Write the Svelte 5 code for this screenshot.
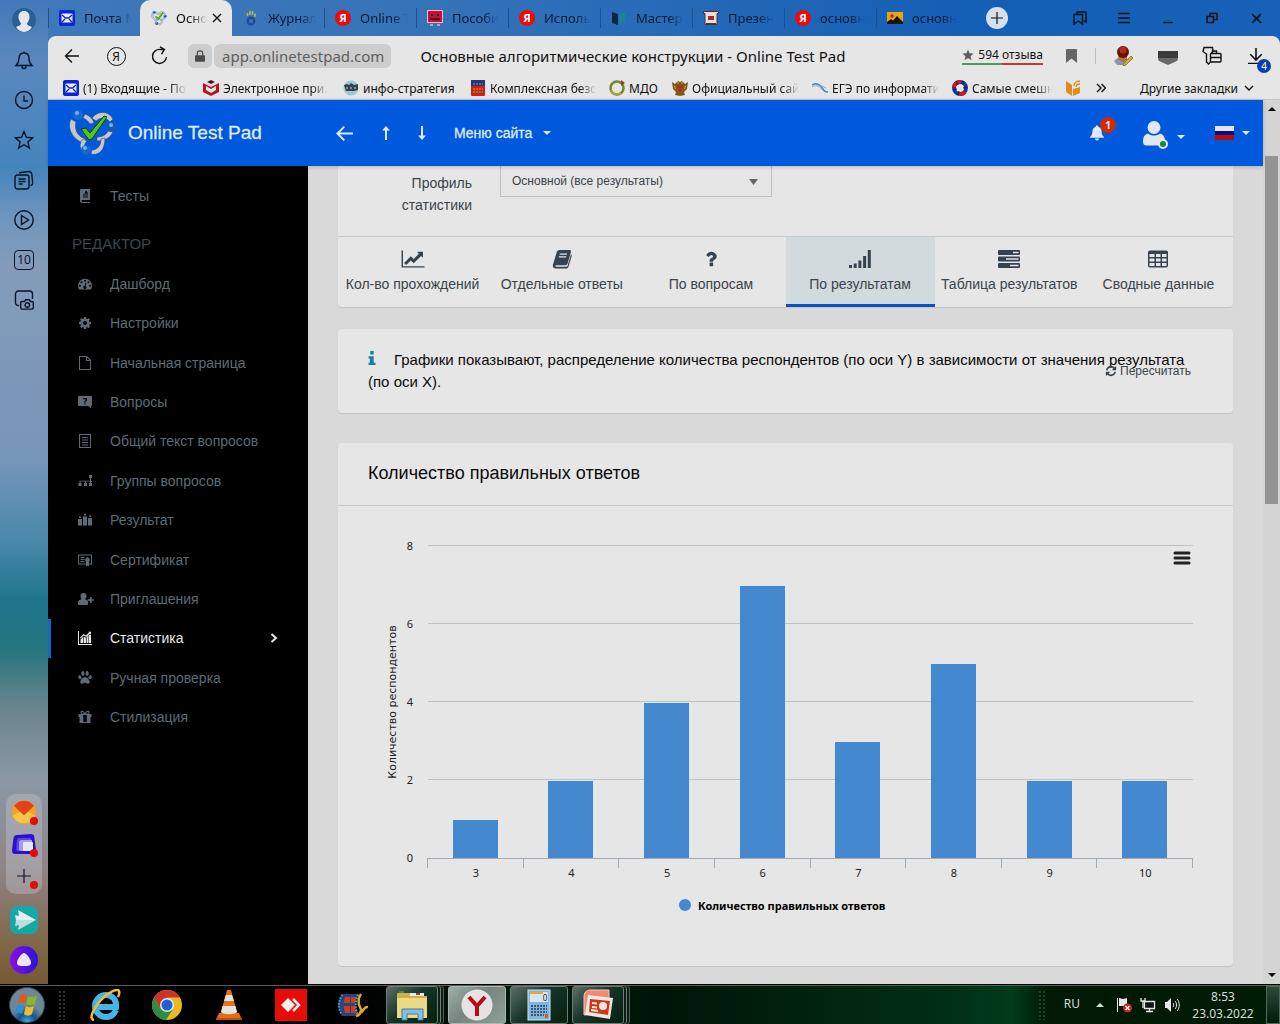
<script lang="ts">
    type Bookmark = { icon: string; title: string; width: number };

    const FA = "0 0 1792 1792";
    const S = "0 0 14 14";

    // filled, single colour icons: [viewBox, path]
    const glyphs: Record<string, [string, string]> = {
        tests: [S, "M3 0h9v11H4.500a1 1 0 0 0 0 2H12v1H4a2 2 0 0 1-2-2V1a1 1 0 0 1 1-1zM5 7.500v1h5v-1zM5 5.500v1h5v-1zM7.500 2 6.500 5h1l.2-.7h1l.3.7h1L8.700 2z"],
        dashboard: [S, "M7 1.800a7 7 0 0 0-7 7c0 1.300.4 2.500 1 3.600h12c.6-1.100 1-2.300 1-3.600a7 7 0 0 0-7-7zM2 7.800a1 1 0 1 1 0 2 1 1 0 0 1 0-2zM3.500 4.300a1 1 0 1 1 0 2 1 1 0 0 1 0-2zM7 2.800a1 1 0 1 1 0 2 1 1 0 0 1 0-2zM10.500 4.300a1 1 0 1 1 0 2 1 1 0 0 1 0-2zM12 7.800a1 1 0 1 1 0 2 1 1 0 0 1 0-2zM7.500 5.800l.9.300-.8 2.900a1.500 1.500 0 1 1-.9-.2z"],
        cog: [FA, "M1152 896q0-106-75-181t-181-75-181 75-75 181 75 181 181 75 181-75 75-181zm512-109v222q0 12-8 23t-20 13l-185 28q-19 54-39 91 35 50 107 138 10 12 10 25t-9 23q-27 37-99 108t-94 71q-12 0-26-9l-138-108q-44 23-91 38-16 136-29 186-7 28-36 28h-222q-14 0-24.5-8.5t-11.5-21.5l-28-184q-49-16-90-37l-141 107q-10 9-25 9-14 0-25-11-126-114-165-168-7-10-7-23 0-12 8-23 15-21 51-66.5t54-70.5q-27-50-41-99l-183-27q-13-2-21-12.5t-8-23.500v-222q0-12 8-23t19-13l186-28q14-46 39-92-40-57-107-138-10-12-10-24 0-10 9-23 26-36 98.5-107.5t94.5-71.5q13 0 26 10l138 107q44-23 91-38 16-136 29-186 7-28 36-28h222q14 0 24.5 8.5t11.5 21.5l28 184q49 16 90 37l142-107q9-9 24-9 13 0 25 10 129 119 165 170 7 8 7 22 0 12-8 23-15 21-51 66.5t-54 70.5q26 50 41 98l183 28q13 2 21 12.5t8 23.5z"],
        file: [S, "M1 0h8l4 4v10H1zM2 1v12h10V5H8V1zM9 1.500V4h2.500z"],
        questions: [S, "M1 1h12a1 1 0 0 1 1 1v8a1 1 0 0 1-1 1v2.500L10.500 11H1a1 1 0 0 1-1-1V2a1 1 0 0 1 1-1zM5 3v1.200h2.600v1L6.300 6.200v1.300h1.200v-.7L9 5.600V3zM6.300 8.300v1.200h1.200V8.300z"],
        text: [S, "M1 0h12v14H1zM2 1v12h10V1zM4 3h6v1H4zM4 5.500h6v1H4zM4 8h6v1H4zM4 10.500h6v1H4z"],
        groups: [S, "M11 1h3v3h-1v3h1v1h-1v1h1v3h-3V9h1V7.500H8V9h1v3H6V9h1V7.500H2.500V9h1v3h-3V9h1V6.700H12V4h-1z"],
        result: [S, "M1 3.500h2v1.600H1zM0 6h4v6.500H0zM6 .8h2v1.700H6zM5 3.500h4v9H5zM11 2.500h2v1.600h-2zM10 5h4v7.500h-4z"],
        certificate: [S, "M0 1.500h14v10h-3v2l-1.500-1-1.500 1v-2H0zM1 2.500v8h7v-2a2.300 2.300 0 1 1 3 0v2h2v-8zM2.500 4h4v1h-4zM2.500 6h4v1h-4zM2.500 8h4v1h-4z"],
        invite: ["0 0 16 14", "M5.500 1a3 3 0 0 1 3 3c0 1.300-.6 2.600-1.500 3.200 2 .3 3 1.400 3 3.300v1.500a1 1 0 0 1-1 1H1a1 1 0 0 1-1-1v-1.500c0-1.900 1.500-3 3.700-3.300C2.900 6.600 2.500 5.300 2.500 4a3 3 0 0 1 3-3zM12 5h1.600v2.200H16v1.600h-2.400V11H12V8.800H9.700V7.200H12z"],
        stats: [S, "M0 0h1v13h13v1H0zM2.500 8.500 5 6v6H2.500zM5.600 5.500 8 6.800V12H5.600zM8.600 6.500 10.500 4v8H8.600zM11 3.800h2V12h-2zM2 6.500 5.500 3l2.500 1.500L11 1.500l-.8-.8H13v2.800l-1-1L8.300 6 5.700 4.400 2.500 7.500z"],
        paw: [S, "M4.800 0c1 0 1.600 1.300 1.600 2.600S5.900 4.800 5 4.800 3.300 3.700 3.300 2.400 3.900 0 4.800 0zM9.200 0c.9 0 1.500 1.100 1.500 2.400S9.900 4.800 9 4.800s-1.400-.9-1.400-2.200S8.200 0 9.200 0zM1.500 4.200C2.600 4.200 3.500 5.500 3.500 6.500S3 8.200 2.100 8.200.3 7 .3 5.900c0-1 .4-1.700 1.200-1.700zM12.500 4.200c.8 0 1.200.7 1.200 1.700 0 1.100-.9 2.300-1.800 2.300s-1.400-.7-1.400-1.700.9-2.300 2-2.300zM7 6c2 0 4.700 3 4.700 5.200 0 1.100-.8 1.500-1.700 1.500-1.200 0-2-.9-3-.9s-1.900.9-3 .9c-.9 0-1.700-.4-1.700-1.500C2.300 9 5 6 7 6z"],
        gift: [S, "M.5 4h3C2 3.500 2 .8 4 .8c1.500 0 2.300 1.200 3 2.200.7-1 1.500-2.200 3-2.200 2 0 2 2.700.5 3.200h3v3h-1v6h-11V7h-1zM4.200 1.900c-1 0-1 1.500 0 1.500h1.900c-.5-.8-1-1.500-1.900-1.500zM9.800 1.900c-.9 0-1.400.7-1.900 1.500h1.900c1 0 1-1.500 0-1.500zM5.300 5v7h3.400V5z"],
        chart: ["0 0 2048 1792", "M2048 1536v128h-2048v-1536h128v1408h1920zm-128-1248v435q0 21-19.5 29.5t-35.5-7.500l-121-121-633 633q-10 10-23 10t-23-10l-233-233-416 416-192-192 585-585q10-10 23-10t23 10l233 233 464-464-121-121q-16-16-7.5-35.5t29.5-19.5h435q14 0 23 9t9 23z"],
        book: ["0 0 20 20", "M7.500 1h10c1.200 0 1.800 1 1.400 2.200l-3.300 11.300c-.4 1.200-1.200 1.700-2.400 1.700H4.100c-.9 0-1 1.600.2 1.600h9.900c.8 0 1.300-.4 1.500-1.200L19 5.200c.7.300.9 1 .7 1.800l-3.200 10.700c-.4 1.100-1.300 1.800-2.600 1.800H3.700C1.500 19.500.3 17.500 1 15.600L4.800 3C5.200 1.700 6 1 7.500 1zM7.800 4.500l-.3 1.200h7.300l.4-1.200zM7 7.200l-.3 1.200H14l.4-1.200z"],
        question: [FA, "M1088 1256v240q0 16-12 28t-28 12h-240q-16 0-28-12t-12-28v-240q0-16 12-28t28-12h240q16 0 28 12t12 28zm316-600q0 54-15.5 101t-35 76.5-55 59.5-57.5 43.5-61 35.5q-41 23-68.5 65t-27.5 67q0 17-12 32.5t-28 15.5h-240q-15 0-25.5-18.5t-10.5-37.5v-45q0-83 65-156.5t143-108.5q59-27 84-56t25-76q0-42-46.5-74t-107.5-32q-65 0-108 29-35 25-107 115-13 16-31 16-12 0-25-8l-164-125q-13-10-15.5-25t5.5-28q160-266 464-266 80 0 161 31t146 83 106 127.5 41 158.5z"],
        signal: ["0 0 22 20", "M0 16h3v3H0zM4.700 14.500h3V19h-3zM9.400 11.500h3V19h-3zM14.100 7h3v12h-3zM18.800 1h3v18h-3z"],
        tasks: ["0 0 22 20", "M1 1h20a1 1 0 0 1 1 1v3a1 1 0 0 1-1 1H1a1 1 0 0 1-1-1V2a1 1 0 0 1 1-1zM15 2.800v1.400h5.500V2.800zM1 7.500h20a1 1 0 0 1 1 1v3a1 1 0 0 1-1 1H1a1 1 0 0 1-1-1v-3a1 1 0 0 1 1-1zM8 9.300v1.400h12.500V9.300zM1 14h20a1 1 0 0 1 1 1v3a1 1 0 0 1-1 1H1a1 1 0 0 1-1-1v-3a1 1 0 0 1 1-1zM12 15.800v1.400h8.500v-1.400z"],
        table: ["0 0 20 20", "M2 1.500h16a2 2 0 0 1 2 2v13a2 2 0 0 1-2 2H2a2 2 0 0 1-2-2v-13a2 2 0 0 1 2-2zM1.500 5v3H6.500V5zM8 5v3h4.500V5zM14 5v3h4.500V5zM1.500 9.500v3h5v-3zM8 9.500v3h4.500v-3zM14 9.500v3h4.500v-3zM1.500 14v3h5v-3zM8 14v3h4.500v-3zM14 14v3h4.500v-3z"],
        refresh: [FA, "M1639 1056q0 5-1 7-64 268-268 434.5t-478 166.5q-146 0-282.5-55t-243.5-157l-129 129q-19 19-45 19t-45-19-19-45v-448q0-26 19-45t45-19h448q26 0 45 19t19 45-19 45l-137 137q71 66 161 102t187 36q134 0 250-65t186-179q11-17 53-117 8-23 30-23h192q13 0 22.5 9.5t9.5 22.5zm25-800v448q0 26-19 45t-45 19h-448q-26 0-45-19t-19-45 19-45l138-138q-148-137-349-137-134 0-250 65t-186 179q-11 17-53 117-8 23-30 23h-199q-13 0-22.5-9.500t-9.500-22.500v-7q65-268 270-434.5t480-166.5q146 0 284 55.5t245 156.5l130-129q19-19 45-19t45 19 19 45z"],
        info: ["0 0 8 16", "M2 0h4v4H2zM0 6h6v7.500h2V16H0v-2.500h1.500V8.500H0z"],
        caret: ["0 0 8 4", "M0 0h8L4 4z"],
        caretUp: ["0 0 8 4", "M0 4h8L4 0z"],
        arrowDown: ["0 0 9 6", "M0 0h9L4.500 6z"],
        bell: ["0 0 16 16", "M8 .5c.8 0 1.200.5 1.200 1.200C11.500 2.300 12.600 4 12.600 6.500c0 3 1 4.200 2.400 5.500v.8H1V12c1.400-1.300 2.400-2.500 2.400-5.500 0-2.500 1.100-4.200 3.400-4.800C6.800 1 7.200.5 8 .5zM6 13.500h4a2 2 0 0 1-4 0z"],
        user: ["0 0 22 25", "M11 0a6.500 6.500 0 1 1 0 13 6.500 6.500 0 0 1 0-13zM5 12.500c3.500 2.700 8.500 2.700 12 0 4 1 5 4.500 5 8 0 2.700-1 4-3.500 4h-15C1 24.500 0 23.200 0 20.500c0-3.500 1-7 5-8z"],
        lock: ["0 0 12 14", "M1 6h1V4a4 4 0 0 1 8 0v2h1a1 1 0 0 1 1 1v6a1 1 0 0 1-1 1H1a1 1 0 0 1-1-1V7a1 1 0 0 1 1-1zm2.500 0h5V4a2.500 2.500 0 0 0-5 0z"],
        starFill: ["0 0 12 12", "M6 .5l1.600 3.700 4 .3-3 2.700.9 4L6 9.100l-3.500 2.100.9-4-3-2.700 4-.3z"],
        ribbon: ["0 0 11 14", "M1 0h9a1 1 0 0 1 1 1v13l-5.500-4.500L0 14V1a1 1 0 0 1 1-1z"],
        navBack: ["0 0 18 16", "M8 0l1.500 1.300L4 7h14v2H4l5.500 5.700L8 16 0 8z"],
        navUp: ["0 0 8 14", "M4 0l4 4.500H5V14H3V4.500H0z"],
        navDown: ["0 0 8 14", "M4 14l4-4.500H5V0H3v9.500H0z"],
    };

    // outlined icons
    const strokes: Record<string, [string, string]> = {
        railBell: ["0 0 20 20", "M10 1.500v1.500M10 3c-3.500 0-5 2.500-5 5.500 0 3.500-1 5-3 7h16c-2-2-3-3.500-3-7C15 5.500 13.500 3 10 3zM8 16.500a2 2 0 0 0 4 0"],
        railClock: ["0 0 20 20", "M10 1.500a8.500 8.500 0 1 1 0 17 8.500 8.500 0 0 1 0-17zM10 5.500V11h4"],
        railStar: ["0 0 20 20", "M10 1.500l2.400 5.800 6.300.5-4.800 4 1.500 6.200L10 14.700 4.600 18l1.500-6.200-4.800-4 6.300-.5z"],
        railTabs: ["0 0 20 20", "M3.500 5h9A2.500 2.500 0 0 1 15 7.500v9a2.500 2.500 0 0 1-2.500 2.500h-9A2.500 2.500 0 0 1 1 16.500v-9A2.500 2.500 0 0 1 3.500 5zM5 2.800 15 1.500c2 0 2.500.8 2.800 2.500l.9 9c0 1.500-.9 2.300-2.200 2.500M4.500 9h7M4.500 11.500h7M4.500 14h4"],
        railPlay: ["0 0 20 20", "M10 .8a9.200 9.200 0 1 1 0 18.400A9.200 9.200 0 0 1 10 .8zM7.500 5.500v9l7-4.500z"],
        railShot: ["0 0 20 20", "M5 15.500A3 3 0 0 1 1.500 13V4A3 3 0 0 1 4.500 1h11a3 3 0 0 1 3 3v5M8.500 11.500h2l1.200-1.700h3.600l1.200 1.700h1.500c.8 0 1.300.5 1.300 1.300v5c0 .8-.5 1.300-1.300 1.300H8c-.8 0-1.300-.5-1.300-1.300v-5c0-.8.500-1.300 1.300-1.300zM13.300 12.800a2.200 2.200 0 1 1 0 4.400 2.200 2.200 0 0 1 0-4.400z"],
        back: ["0 0 16 16", "M8 1.500L1.500 8 8 14.500M1.500 8H15"],
        reload: ["0 0 18 20", "M9.500 3.500A7 7 0 1 0 15.500 11M9 .8l4.500 2.700-3 4.700M13.500 3.500H9"],
        close: ["0 0 10 10", "M1 1l8 8M9 1L1 9"],
        plus: ["0 0 14 14", "M7 0v14M0 7h14"],
        collections: ["0 0 14 14", "M4 3V1h9v10l-2-1.500M1 3.500h8.500V13l-4.200-3L1 13z"],
        burger: ["0 0 12 12", "M0 1.500h12M0 6h12M0 10.500h12"],
        minimize: ["0 0 12 12", "M1 10.500h10"],
        restore: ["0 0 12 12", "M1 4.500h6.500v6H1zM4 4.500V1.500h7v6H7.500"],
        passwords: ["0 0 20 20", "M2 1.500h8.500l.5 4L8.500 8v8L6.500 18l-2-2V8L1 5.500zM10.500 6.500V5h4v2M9 7.500h9c.600 0 1 .4 1 1V15c0 .6-.4 1-1 1H9M9 11.500h10"],
        download: ["0 0 14 14", "M7 0v10M2 5.500l5 5 5-5M0 13.500h14"],
        more: ["0 0 10 10", "M1 1l4 4-4 4M5.500 1l4 4-4 4"],
        down: ["0 0 10 6", "M1 1l4 4 4-4"],
        right: ["0 0 8 10", "M1.500 1L6 5 1.500 9"],
    };

    const tabs = [
        { icon: "mail", title: "Почта M" },
        { icon: "otp", title: "Осно", active: true },
        { icon: "hand", title: "Журнал" },
        { icon: "ya", title: "Online T" },
        { icon: "robot", title: "Пособи" },
        { icon: "ya", title: "Исполь" },
        { icon: "master", title: "Мастер-" },
        { icon: "slides", title: "Презен" },
        { icon: "ya", title: "основн" },
        { icon: "photo", title: "основн" },
    ];

    const bookmarks: Bookmark[] = [
        { icon: "mail", title: "(1) Входящие - По", width: 127 },
        { icon: "cube", title: "Электронное при.", width: 127 },
        { icon: "info", title: "инфо-стратегия", width: 114 },
        { icon: "coat", title: "Комплексная безо", width: 126 },
        { icon: "ring", title: "МДО", width: 50 },
        { icon: "eagle", title: "Официальный сай", width: 127 },
        { icon: "wave", title: "ЕГЭ по информати", width: 127 },
        { icon: "shutter", title: "Самые смешн", width: 100 },
        { icon: "feed", title: "", width: 18 },
    ];

    const rail = [
        { icon: "railBell", label: "Уведомления" },
        { icon: "railClock", label: "История" },
        { icon: "railStar", label: "Избранное" },
        { icon: "railTabs", label: "Коллекции" },
        { icon: "railPlay", label: "Музыка" },
        { icon: "", label: "Вкладки" },
        { icon: "railShot", label: "Скриншот" },
    ];

    const menu = [
        { icon: "dashboard", title: "Дашборд" },
        { icon: "cog", title: "Настройки" },
        { icon: "file", title: "Начальная страница" },
        { icon: "questions", title: "Вопросы" },
        { icon: "text", title: "Общий текст вопросов" },
        { icon: "groups", title: "Группы вопросов" },
        { icon: "result", title: "Результат" },
        { icon: "certificate", title: "Сертификат" },
        { icon: "invite", title: "Приглашения" },
        { icon: "stats", title: "Статистика", active: true },
        { icon: "paw", title: "Ручная проверка" },
        { icon: "gift", title: "Стилизация" },
    ];

    const reports = [
        { id: "runs", icon: "chart", title: "Кол-во прохождений" },
        { id: "answers", icon: "book", title: "Отдельные ответы" },
        { id: "questions", icon: "question", title: "По вопросам" },
        { id: "results", icon: "signal", title: "По результатам" },
        { id: "table", icon: "tasks", title: "Таблица результатов" },
        { id: "summary", icon: "table", title: "Сводные данные" },
    ];

    let report = $state("results");

    const points = [
        { score: 3, count: 1 },
        { score: 4, count: 2 },
        { score: 5, count: 4 },
        { score: 6, count: 7 },
        { score: 7, count: 3 },
        { score: 8, count: 5 },
        { score: 9, count: 2 },
        { score: 10, count: 2 },
    ];

    const PLOT_LEFT = 60;
    const PLOT_RIGHT = 825;
    const PLOT_TOP = 11;
    const PLOT_BOTTOM = 323;
    const BAR_WIDTH = 45;
    const MAX_COUNT = 8;

    const slot = (PLOT_RIGHT - PLOT_LEFT) / points.length;
    const unit = (PLOT_BOTTOM - PLOT_TOP) / MAX_COUNT;

    function yFor(value: number) {
        return PLOT_BOTTOM - value * unit;
    }

    function tickX(index: number) {
        return Math.round(PLOT_LEFT + index * slot) - 0.5;
    }

    function barX(index: number) {
        return Math.floor(PLOT_LEFT + (index + 0.5) * slot - BAR_WIDTH / 2);
    }
</script>

{#snippet glyph(name: string)}
    <svg class="glyph {name}" viewBox={glyphs[name][0]} aria-hidden="true">
        <path fill="currentColor" fill-rule="evenodd" d={glyphs[name][1]} />
    </svg>
{/snippet}

{#snippet line(name: string)}
    <svg class="line {name}" viewBox={strokes[name][0]} aria-hidden="true">
        <path fill="none" stroke="currentColor" d={strokes[name][1]} />
    </svg>
{/snippet}

{#snippet logo()}
    <svg class="logo" viewBox="0 0 50 46" aria-hidden="true">
        <g fill="#c4c8ce" stroke="#39455f" stroke-width=".6">
            <path d="M3 9C-1 17 3 28 15 33l3-4C10 27 6 20 8 12z" />
            <path d="M17 4c5 2 8 5 9 9l-4 1c-2-3-4-5-7-6z" />
            <path d="M24 8c5-7 16-8 21 1l-3 3c-4-5-9-5-14-1z" />
            <path d="M45 22c-3 6-8 9-16 9v-4c5 0 9-2 11-6z" />
            <path d="M15 29c-3 3-4 8-1 12l3-4c-1-2 0-4 2-6z" />
            <path d="M23 44c8 2 14-4 14-16l-4 1c0 7-4 11-9 11z" />
        </g>
        <circle cx="10" cy="5" r="5" fill="#1767cd" /><circle cx="9" cy="3" r="2" fill="#77b3f2" />
        <circle cx="44" cy="17" r="5" fill="#1258bd" /><circle cx="43" cy="15" r="2" fill="#77b3f2" />
        <circle cx="18" cy="40" r="5" fill="#1767cd" /><circle cx="17" cy="38" r="2" fill="#77b3f2" />
        <path fill="#4dc814" stroke="#103908" d="M13 19l5-1 4 5L36 6l3 1-15 22-3 1z" />
    </svg>
{/snippet}

{#snippet favicon(name: string)}
    {#if name === "otp"}
        {@render logo()}
    {:else}
        <svg class="favicon" viewBox="0 0 16 16" aria-hidden="true">
            {#if name === "mail"}
                <rect width="16" height="16" rx="2" fill="#0827d4" />
                <rect x="2.500" y="3.500" width="11" height="9" rx="1" fill="#e8ecf6" />
                <path fill="none" stroke="#0827d4" stroke-width="1.300" d="M3 5l3.500 3h3L13 5M3 12l3-3M13 12l-3-3" />
            {:else if name === "ya"}
                <circle cx="8" cy="8" r="8" fill="#ee0b07" />
                <text x="8" y="12" text-anchor="middle" fill="#fff" font-size="11" font-weight="700">Я</text>
            {:else if name === "hand"}
                <circle cx="8" cy="11" r="3.300" fill="none" stroke="#1d4e9c" stroke-width="2.400" />
                <path stroke="#c3b438" stroke-width="1.600" d="M4.500 6V3M7 5V1M9.500 5V1M12 7V3.500" />
            {:else if name === "robot"}
                <rect x=".5" y=".5" width="15" height="12" fill="#c5103a" stroke="#efb8c6" />
                <path fill="#4c0515" d="M4 4h2v2H4zM10 4h2v2h-2zM3 8h10v2H3z" />
                <path stroke="#d997a8" stroke-width="2" d="M3 15h3M10 15h3" />
            {:else if name === "master"}
                <path fill="#0b2743" d="M1 2l6 2v11l-6-2z" /><path fill="#1a8594" d="M8 4l6-2v10l-6 3z" />
            {:else if name === "slides"}
                <path fill="#e8dfdc" stroke="#4f3230" d="M.5 1.500h15v2h-1.500v11H2v-11H.5z" />
                <path fill="#ae2820" d="M5 6h6v4H5z" /><path fill="#4f3230" d="M3 13h10v1H3z" />
            {:else if name === "photo"}
                <rect y="2" width="16" height="12" fill="#eba50b" /><circle cx="5" cy="6" r="1.800" fill="#c71f18" />
                <path fill="#17130b" d="M0 14v-2l4-3 2 1.500L10 6l6 6v2z" />
            {:else if name === "cube"}
                <path fill="#b51420" d="M0 3l8 4 8-4v9l-8 4-8-4z" /><path fill="#5b0c12" d="M4 2l4-2 4 2-4 2z" />
                <path fill="#e7e4e4" d="M3 6l5 3 5-3v4l-5 3-5-3z" />
            {:else if name === "info"}
                <circle cx="8" cy="8" r="7.500" fill="#9cc8de" /><path fill="#33434c" d="M1 5l3-1 2 1 2-2 3 2 4-1v6l-4 1H3z" />
                <path stroke="#cfdfe8" d="M3 8h2M7 8h2M11 8h2" />
            {:else if name === "coat"}
                <rect x="1" width="14" height="16" rx="1" fill="#c42516" /><path fill="#223587" d="M1 0h14v6H1z" />
                <path stroke="#d9952b" stroke-dasharray="2 1" d="M3 4h10M3 9h10M3 12h10" />
            {:else if name === "ring"}
                <circle cx="8" cy="8" r="6.500" fill="none" stroke="#6b8c28" stroke-width="2.500" />
                <path fill="none" stroke="#b5a03c" stroke-width="2" d="M2 10a6.500 6.500 0 0 0 10 3" /><path fill="#a33a26" d="M12 0l4 3-4 3z" />
            {:else if name === "eagle"}
                <path fill="#7d5a16" d="M0 2l3 2 3-3 2 1 2-1 3 3 3-2-1 7-3 3 1 3-5 1-5-1 1-3-3-3z" />
                <path fill="#bd2a1e" d="M5.500 6h5v4L8 12l-2.500-2z" /><path stroke="#c9a83f" d="M2 6l2 3M14 6l-2 3M5 3h2M9 3h2" />
            {:else if name === "wave"}
                <path fill="none" stroke="#4e8fb5" stroke-width="1.600" d="M0 5c5-3 9 1 11 4 1 3 3 3 5 3" />
                <path fill="none" stroke="#86b4cf" d="M0 7c5-3 8 0 10 3M8 5l6 3" />
            {:else if name === "shutter"}
                <circle cx="8" cy="8" r="6" fill="none" stroke="#1537a3" stroke-width="4" />
                <path fill="none" stroke="#c91e1a" stroke-width="4" d="M9 2a6 6 0 0 0-7 5M7 14a6 6 0 0 0 6-2" />
                <path stroke="#222" d="M4 1l2 4M12 1l-1 4M1 10l4-1M15 7l-4 1M6 15l1-4" />
            {:else if name === "feed"}
                <path fill="#e28c20" d="M1 1l6 4v11l-6-4zM8 16V9l7-2v6z" />
                <path fill="none" stroke="#e28c20" stroke-width="1.300" d="M9 6c0-3 2-5 6-5M11 7c0-2 2-3 4-3" />
            {/if}
        </svg>
    {/if}
{/snippet}

<div class="desktop">
    <div class="browser">
        <aside class="rail">
            <button type="button" aria-label="Профиль">
                <svg class="avatar" viewBox="0 0 24 24" aria-hidden="true">
                    <circle cx="12" cy="12" r="12" fill="#2c5f96" />
                    <path fill="#e4e8ed" d="M12 3c3.500 0 5.500 2.500 5.500 6 0 3-1.500 5-2.500 6.500 0 2 3 2.500 5 3.500-4 6.500-12 6.500-16 0 2-1 5-1.500 5-3.500C8 14 6.500 12 6.500 9c0-3.500 2-6 5.500-6z" />
                </svg>
            </button>
            {#each rail as item}
                <button type="button" aria-label={item.label}>
                    {#if item.icon}
                        {@render line(item.icon)}
                    {:else}
                        <span class="tab-count">10</span>
                    {/if}
                </button>
            {/each}
            <div class="pinned">
                <button type="button" aria-label="Почта">
                    <svg viewBox="0 0 24 24" aria-hidden="true">
                        <circle cx="12" cy="12" r="12" fill="#f0a528" />
                        <path fill="#f5c54a" d="M1 16l11-7 11 7a12 12 0 0 1-22 0z" />
                        <path fill="#e2431d" d="M2 6a12 12 0 0 1 20 0L12 15.500z" />
                    </svg>
                    <i class="dot"></i>
                </button>
                <button type="button" aria-label="Телемост">
                    <svg viewBox="0 0 24 24" aria-hidden="true">
                        <path fill="#2f0fce" d="M5 3l14-1c2 0 3 1 3.200 3L24 18c0 3-1 4-3 4H4c-3 0-4-1-4-4L1.500 6C2 4 3 3 5 3z" />
                        <path fill="#5a46dc" d="M7 6h12l1 13H6c-1 0-2-1-2-2l1-9c0-1 1-2 2-2z" />
                        <path fill="#a79cee" d="M9 8h11v11H9c-1 0-2-1-2-2V10c0-1 1-2 2-2z" />
                        <rect x="11" y="10" width="10" height="9" rx="1" fill="#e9e7f5" />
                    </svg>
                    <i class="dot"></i>
                </button>
                <button type="button" aria-label="Добавить">
                    {@render line("plus")}
                    <i class="dot"></i>
                </button>
            </div>
            <button type="button" aria-label="Мессенджер">
                <svg class="app" viewBox="0 0 28 28" aria-hidden="true">
                    <rect width="28" height="28" rx="7" fill="#15a9a5" />
                    <path fill="#e5efef" d="M8 4l18 10H6L5 9l4 1z" /><path fill="#c3dcdc" d="M6 14h20L8 24l1-5-4 1z" />
                </svg>
            </button>
            <button type="button" aria-label="Алиса">
                <svg class="app" viewBox="0 0 28 28" aria-hidden="true">
                    <defs>
                        <linearGradient id="alice" x2="1"><stop stop-color="#8a10e0" /><stop offset="1" stop-color="#2a14d8" /></linearGradient>
                    </defs>
                    <circle cx="14" cy="14" r="14" fill="url(#alice)" />
                    <path fill="#eae6f2" d="M14 7c2 0 7 6 7 9.500S18 20 14 20s-7 0-7-3.500S12 7 14 7z" />
                </svg>
            </button>
        </aside>

        <div class="window">
            <div class="tab-strip">
                {#each tabs as tab}
                    <div class="tab" class:active={tab.active}>
                        {@render favicon(tab.icon)}
                        <span class="fade">{tab.title}</span>
                        {#if tab.active}
                            <button type="button" aria-label="Закрыть вкладку">{@render line("close")}</button>
                        {/if}
                    </div>
                {/each}
                <button type="button" class="new-tab" aria-label="Новая вкладка">{@render line("plus")}</button>
                <div class="window-buttons">
                    <button type="button" aria-label="Коллекции">{@render line("collections")}</button>
                    <button type="button" aria-label="Меню">{@render line("burger")}</button>
                    <button type="button" aria-label="Свернуть">{@render line("minimize")}</button>
                    <button type="button" aria-label="Восстановить">{@render line("restore")}</button>
                    <button type="button" aria-label="Закрыть">{@render line("close")}</button>
                </div>
            </div>

            <div class="chrome">
                <div class="address">
                    <button type="button" aria-label="Назад">{@render line("back")}</button>
                    <button type="button" class="yandex" aria-label="Яндекс"><span>Я</span></button>
                    <button type="button" aria-label="Обновить">{@render line("reload")}</button>
                    <span class="lock-box">{@render glyph("lock")}</span>
                    <span class="url">app.onlinetestpad.com</span>
                    <span class="page-title">Основные алгоритмические конструкции - Online Test Pad</span>
                    <a class="reviews" href="#reviews">{@render glyph("starFill")}594 отзыва</a>
                    <button type="button" class="mark" aria-label="В закладки">{@render glyph("ribbon")}</button>
                    <span class="divider"></span>
                    <button type="button" aria-label="Расширение">
                        <svg class="extension" viewBox="0 0 20 20" aria-hidden="true">
                            <path fill="#8498b5" d="M0 15l6-5 6 5-3 4H3z" /><path fill="#b7722a" d="M4 8h9v6l-4 2-4-2z" />
                            <circle cx="9" cy="6" r="6" fill="#6d100c" /><circle cx="9" cy="4" r="3.500" fill="#b62a1c" />
                            <path fill="#d7a92c" stroke="#4d3a12" stroke-width=".5" d="M10 17l7-7 2 2-7 7-3 1z" />
                        </svg>
                    </button>
                    <button type="button" aria-label="Карман">
                        <svg class="pocket" viewBox="0 0 20 20" aria-hidden="true">
                            <path fill="#6a6a6a" d="M0 5h20v7c0 2-.8 3-2 3.500L10 19l-8-3.500C.8 15 0 14 0 12z" /><path fill="#3c3c3c" d="M0 5h20v7H0z" />
                        </svg>
                    </button>
                    <button type="button" aria-label="Пароли">{@render line("passwords")}</button>
                    <button type="button" class="downloads" aria-label="Загрузки">
                        {@render line("download")}
                        <span class="count">4</span>
                    </button>
                </div>
                <div class="bookmarks">
                    {#each bookmarks as mark}
                        <a href="#bookmark" aria-label={mark.title || "Лента"} style:width="{mark.width}px">
                            {@render favicon(mark.icon)}
                            {#if mark.title}
                                <span class:fade={mark.width >= 126 || mark.width === 100}>{mark.title}</span>
                            {/if}
                        </a>
                    {/each}
                    <button type="button" class="more-marks" aria-label="Ещё">{@render line("more")}</button>
                    <button type="button" class="other">Другие закладки {@render line("down")}</button>
                </div>
            </div>

            <div class="viewport">
                <div class="page">
                    <header>
                        <a class="brand" href="#home">{@render logo()}Online Test Pad</a>
                        <nav>
                            <a href="#back" aria-label="Назад">{@render glyph("navBack")}</a>
                            <a href="#up" aria-label="Вверх">{@render glyph("navUp")}</a>
                            <a href="#down" aria-label="Вниз">{@render glyph("navDown")}</a>
                            <button type="button" class="site-menu">Меню сайта {@render glyph("caret")}</button>
                        </nav>
                        <div class="account">
                            <button type="button" class="alerts" aria-label="Уведомления">
                                {@render glyph("bell")}
                                <span class="alert-count">1</span>
                            </button>
                            <button type="button" class="profile" aria-label="Профиль">
                                {@render glyph("user")}
                                <i class="online"></i>
                                {@render glyph("caret")}
                            </button>
                            <button type="button" class="language" aria-label="Язык">
                                <span class="flag"></span>
                                {@render glyph("caret")}
                            </button>
                        </div>
                    </header>

                    <div class="columns">
                        <nav class="sidebar">
                            <a class="item" href="#tests"><span class="icon">{@render glyph("tests")}</span>Тесты</a>
                            <h2>РЕДАКТОР</h2>
                            <div class="items">
                                {#each menu as item}
                                    <a class="item" class:active={item.active} href="#{item.icon}">
                                        <span class="icon">{@render glyph(item.icon)}</span>{item.title}
                                        {#if item.active}{@render line("right")}{/if}
                                    </a>
                                {/each}
                            </div>
                        </nav>

                        <main>
                            <section class="card filter">
                                <div class="profile-row">
                                    <label for="stat-profile">Профиль статистики</label>
                                    <div class="select">
                                        <select id="stat-profile">
                                            <option>Основной (все результаты)</option>
                                        </select>
                                        {@render glyph("arrowDown")}
                                    </div>
                                </div>
                                <div class="reports">
                                    {#each reports as item}
                                        <button
                                            type="button"
                                            class:active={report === item.id}
                                            onclick={() => (report = item.id)}
                                        >
                                            {@render glyph(item.icon)}
                                            {item.title}
                                        </button>
                                    {/each}
                                </div>
                            </section>

                            <section class="card hint">
                                <p>{@render glyph("info")}Графики показывают, распределение количества респондентов (по оси Y) в зависимости от значения результата (по оси X).</p>
                                <button type="button" class="recount">{@render glyph("refresh")}Пересчитать</button>
                            </section>

                            <section class="card">
                                <h1>Количество правильных ответов</h1>
                                <div class="chart-body">
                                    <svg class="plot" viewBox="0 0 835 400" role="img" aria-label="Количество правильных ответов">
                                        {#each [0, 2, 4, 6, 8] as value}
                                            {#if value > 0}
                                                <path class="grid" d="M{PLOT_LEFT} {yFor(value) - 0.5}H{PLOT_RIGHT}" />
                                            {/if}
                                            <text x="45" y={yFor(value) + 4} text-anchor="end">{value}</text>
                                        {/each}
                                        {#each points as point, i}
                                            <rect
                                                class="bar"
                                                x={barX(i)}
                                                y={yFor(point.count) + 1}
                                                width={BAR_WIDTH}
                                                height={point.count * unit - 1}
                                            />
                                            <text x={PLOT_LEFT + (i + 0.5) * slot} y="342" text-anchor="middle">{point.score}</text>
                                        {/each}
                                        <path class="axis" d="M{PLOT_LEFT} 323.500H{PLOT_RIGHT}" />
                                        {#each { length: points.length + 1 } as _, i}
                                            <path class="axis" d="M{tickX(i)} 323v10" />
                                        {/each}
                                        <text class="axis-title" transform="translate(28 167) rotate(-90)" text-anchor="middle">Количество респондентов</text>
                                        <circle class="bar" cx="317" cy="370" r="6" />
                                        <text class="legend" x="330" y="375">Количество правильных ответов</text>
                                        <path class="export" d="M807 18h14M807 23h14M807 28h14" />
                                    </svg>
                                </div>
                            </section>
                        </main>
                    </div>
                </div>
                <div class="scrollbar">
                    {@render glyph("caretUp")}
                    <span class="thumb"></span>
                    {@render glyph("caret")}
                </div>
            </div>
        </div>
    </div>

    <footer class="taskbar">
        <button type="button" class="start" aria-label="Пуск">
            <svg viewBox="0 0 36 36" aria-hidden="true">
                <defs>
                    <radialGradient id="orb" cy="1"><stop stop-color="#39b9e8" /><stop offset=".5" stop-color="#145391" /><stop offset="1" stop-color="#6d8797" /></radialGradient>
                </defs>
                <circle cx="18" cy="18" r="17.500" fill="url(#orb)" stroke="#354958" />
                <path fill="#e8561d" d="M11 9c2-2 5-2 7 0l-2 8c-2-2-5-1-7 0z" /><path fill="#86b82a" d="M19 9c3 2 6 1 9-1l-2 9c-2 1-6 2-9 0z" />
                <path fill="#328fd6" d="M8 19c2-2 5-2 7 0l-2 8c-2-2-4-1-7 0z" /><path fill="#f2bb2b" d="M17 19c3 2 6 1 8 0l-2 8c-2 2-6 2-8 0z" />
            </svg>
        </button>
        <span class="grip"></span>
        <button type="button" class="launch" aria-label="Internet Explorer">
            <svg viewBox="0 0 32 32" aria-hidden="true">
                <path fill="none" stroke="#47b4e6" stroke-width="6" d="M27 21c-2 5-6 7-10 7-6 0-11-5-11-11S11 6 17 6s11 5 10 12H8" />
                <path fill="none" stroke="#f1be2c" stroke-width="2.500" d="M5 31C-1 30 5 19 12 11S29-1 30 2c1 2 0 4-1 6" />
            </svg>
        </button>
        <button type="button" class="launch" aria-label="Chrome">
            <svg viewBox="0 0 32 32" aria-hidden="true">
                <circle cx="16" cy="16" r="15" fill="#e9b823" /><path fill="#cb3427" d="M3 8.500A15 15 0 0 1 29 8.500H16L9.500 20z" />
                <path fill="#2d8b42" d="M3 8.500A15 15 0 0 0 15 31l7-11-6 2-6.500-2z" /><circle cx="16" cy="16" r="7" fill="#e6e6e6" /><circle cx="16" cy="16" r="5.500" fill="#1b62d8" />
            </svg>
        </button>
        <button type="button" class="launch" aria-label="VLC">
            <svg viewBox="0 0 32 32" aria-hidden="true">
                <path fill="#e76c10" d="M6 24h20l3 7H3z" /><path fill="#e87017" d="M14 1h4l6 22c-2 4-14 4-16 0z" />
                <path fill="#e3e3e3" d="M13 6h6l2 6H11zM9.500 17h13l1.500 6c-3 3-13 3-16 0z" /><path fill="#c24c0a" d="M3 29h26v2H3z" />
            </svg>
        </button>
        <button type="button" class="launch" aria-label="AnyDesk">
            <svg viewBox="0 0 32 32" aria-hidden="true">
                <path fill="#e80c08" d="M0 0h32v32H0z" /><path fill="#f4eeee" d="M6 16l7-7 7 7-7 7z" /><path fill="none" stroke="#f4eeee" stroke-width="2.500" d="M18 10l6 6-6 6" />
            </svg>
        </button>
        <button type="button" class="launch" aria-label="Movie Maker">
            <svg viewBox="0 0 32 32" aria-hidden="true">
                <path fill="#1d4a78" d="M5 5h17c-4 7-3 15 0 22H5C0 20 0 12 5 5z" /><path fill="#cf3a20" d="M8 8h5v6H6.500zM14 8h5l-1 6h-4zM6.500 17H13v7H8zM14 17h4l1 7h-5z" />
                <path fill="none" stroke="#89b8da" stroke-dasharray="1 2" stroke-width="2" d="M5 6c-4 6-4 14 0 20M21 6c-3 7-3 14 0 20" />
                <path fill="none" stroke="#dba728" stroke-width="2.500" d="M24 5c-3 4-3 10-1 13s1 8-4 9M22 24c5 0 4-7 9-6" />
            </svg>
        </button>
        <button type="button" class="task stacked" aria-label="Проводник">
            <svg viewBox="0 0 32 32" aria-hidden="true">
                <path fill="#c9b24e" d="M1 4h13l2 3h15v22H1z" /><path fill="#ecd982" d="M1 9h30v20H1z" /><path fill="#e8eae4" d="M14 4h14v3H14z" />
                <path fill="#3f8f3b" d="M3 2h5v2H3z" /><path fill="#bb3222" d="M20 4h4v2h-4z" /><path fill="#86bfe3" stroke="#3b7bac" d="M6 20h21v11h-5v-6H11v6H6z" />
            </svg>
        </button>
        <button type="button" class="task current" aria-label="Яндекс.Браузер">
            <svg viewBox="0 0 32 32" aria-hidden="true">
                <circle cx="16" cy="16" r="15.500" fill="#e4e2e2" /><path fill="none" stroke="#b90c12" stroke-width="4" d="M8 8l8 9 8-9M16 16v11" />
            </svg>
        </button>
        <button type="button" class="task" aria-label="Калькулятор">
            <svg viewBox="0 0 32 32" aria-hidden="true">
                <rect x="5" y="1" width="22" height="30" fill="#83b5dc" stroke="#d3e2ee" /><rect x="7" y="3" width="18" height="10" fill="#d5e5ee" />
                <path fill="#e8a33a" d="M7 3h13v2H7z" /><text x="22" y="12" text-anchor="middle" font-size="8" fill="#223">0</text>
                <path stroke="#35597c" stroke-width="2" stroke-dasharray="2 1" d="M8 17h16M8 20h16M8 23h16M8 26h13" /><path fill="#d55a25" d="M22 25h3v4h-3z" />
            </svg>
        </button>
        <button type="button" class="task stacked" aria-label="PowerPoint">
            <svg viewBox="0 0 32 32" aria-hidden="true">
                <path fill="#e98c72" stroke="#f3cabd" d="M2 26V8c0-4 2-7 6-7h19v22z" /><path fill="#f1e5df" d="M6 6l25 3-3 21-25-4z" />
                <path fill="#c63b1c" d="M8 10l20 2-2 14-19-3z" /><circle cx="21" cy="17" r="4" fill="#f1e5df" /><path stroke="#f1e5df" stroke-width="2" d="M10 14l5 .5M10 18l5 .5M9 21l7 1" />
            </svg>
        </button>
        <div class="tray">
            <span class="grip"></span>
            <span class="lang">RU</span>
            {@render glyph("caretUp")}
            <svg viewBox="0 0 16 16" aria-hidden="true">
                <path fill="#e6e6e6" d="M1 1h1v14H1zM3 1l4 1 4-1v8H3z" /><circle cx="11.500" cy="11" r="4.500" fill="#c81e1e" />
                <path stroke="#fff" stroke-width="1.500" d="M9.500 9l4 4M13.500 9l-4 4" />
            </svg>
            <svg viewBox="0 0 16 16" aria-hidden="true">
                <path fill="#0b150d" stroke="#e6e6e6" stroke-width="1.300" d="M4.500 4.500h10v7h-10z" /><path stroke="#e6e6e6" stroke-width="1.300" d="M6 14.500h7M9.500 12v2M1 1v3h4V1M3 4v7" fill="none" />
            </svg>
            <svg viewBox="0 0 16 16" aria-hidden="true">
                <path fill="#e6e6e6" d="M1 5h2l4-4v14l-4-4H1z" /><path fill="none" stroke="#e6e6e6" d="M9 6c1 1 1 3 0 4M11 4c2 2 2 6 0 8M13 2c3 3 3 9 0 12" />
            </svg>
            <time datetime="2022-03-23T08:53">8:53<br />23.03.2022</time>
            <button type="button" class="show-desktop" aria-label="Свернуть все окна"></button>
        </div>
    </footer>
</div>

<style>
    :global(body) {
        margin: 0;
    }

    .desktop {
        height: 100vh;
        display: grid;
        grid-template-rows: minmax(0, 1fr) 40px;
        overflow: hidden;
        font-family: "Liberation Sans", Arial, sans-serif;
        font-size: 14px;
    }

    .desktop * {
        box-sizing: border-box;
    }

    button {
        padding: 0;
        border: 0;
        background: none;
        color: inherit;
        font: inherit;
        display: flex;
        align-items: center;
        justify-content: center;
        cursor: pointer;
    }

    a {
        color: inherit;
        text-decoration: none;
    }

    svg {
        display: block;
        flex: none;
        width: 16px;
        height: 16px;
    }

    .line {
        stroke-width: 1.4px;
    }

    .caret,
    .caretUp {
        width: 8px;
        height: 4px;
    }

    .browser {
        min-height: 0;
        display: grid;
        grid-template-columns: 48px minmax(0, 1fr);
        background: linear-gradient(100deg, #4179b9, #3472b8 35%, #145fb6 75%, #1761b8) top / 100% 60px no-repeat;
    }

    .rail {
        display: flex;
        flex-direction: column;
        padding-bottom: 4px;
        color: #0a1426;
        background: linear-gradient(
            #4279ba,
            #5a88be 6%,
            #4484bd 17%,
            #6f95bd 22%,
            #849cba 27%,
            #7595b9 47%,
            #4a88aa 55%,
            #1f758c 61%,
            #26757f 66%,
            #6a858d 72%,
            #8a98a5 79%,
            #90868a 88%,
            #83694f 95%,
            #785a32
        );
    }

    .rail > button {
        height: 40px;
        flex: none;
    }

    .rail .line {
        width: 20px;
        height: 20px;
    }

    .avatar {
        width: 24px;
        height: 24px;
    }

    .tab-count {
        width: 20px;
        height: 20px;
        border: 1px solid #0a1426;
        border-radius: 4px;
        font: 12px/18px "Noto Sans", sans-serif;
    }

    .pinned {
        margin: auto 6px 6px;
        height: 100px;
        padding: 2px 0;
        border-radius: 10px;
        background: rgba(200, 205, 215, 0.35);
        display: grid;
        grid-auto-rows: 1fr;
    }

    .pinned button {
        position: relative;
    }

    .pinned svg {
        width: 24px;
        height: 24px;
    }

    .rail .plus {
        width: 14px;
        height: 14px;
        stroke-width: 1.2px;
    }

    .dot {
        position: absolute;
        right: 4px;
        bottom: 3px;
        width: 8px;
        height: 8px;
        border-radius: 50%;
        background: #e60a0a;
    }

    .app {
        width: 28px;
        height: 28px;
    }

    .window {
        min-width: 0;
        min-height: 0;
        display: grid;
        grid-template-rows: 36px 64px minmax(0, 1fr);
        font-family: "Noto Sans", sans-serif;
        font-size: 13px;
        color: #111;
    }

    .tab-strip {
        display: flex;
        min-width: 0;
    }

    .tab {
        width: 92px;
        padding: 0 8px 0 11px;
        display: flex;
        align-items: center;
        gap: 9px;
        color: #0b1a33;
        background: linear-gradient(#1f4f8c, #1f4f8c) left / 1px 20px no-repeat;
    }

    .tab.active {
        border-radius: 10px 10px 0 0;
        background: #e6e6e6;
        color: #111;
    }

    .tab.active + .tab {
        background: none;
    }

    .tab .logo {
        width: 16px;
        height: 16px;
    }

    .tab .close {
        width: 10px;
        height: 10px;
    }

    .tab.active .fade {
        width: 31px;
    }

    .tab.active button {
        margin-left: -4px;
    }

    .favicon text {
        font-family: "Noto Sans", sans-serif;
    }

    .fade {
        min-width: 0;
        overflow: hidden;
        white-space: nowrap;
        mask-image: linear-gradient(to left, transparent, #000 16px);
    }

    .new-tab {
        width: 22px;
        height: 22px;
        margin: 7px 18px;
        border-radius: 50%;
        background: #d6dfeb;
    }

    .new-tab .plus {
        width: 12px;
        height: 12px;
    }

    .window-buttons {
        margin-left: auto;
        display: flex;
        padding-right: 2px;
    }

    .window-buttons button {
        width: 44px;
    }

    .window-buttons .line {
        width: 12px;
        height: 12px;
    }

    .window-buttons .close {
        width: 11px;
        height: 11px;
    }

    .window-buttons .collections {
        width: 14px;
        height: 14px;
    }

    .chrome {
        background: #e6e6e6;
        border-radius: 8px 8px 0 0;
        border-bottom: 1px solid #c4c4c4;
    }

    .address {
        height: 40px;
        display: flex;
        align-items: center;
        padding-left: 2px;
    }

    .address > button {
        width: 44px;
        height: 40px;
    }

    .yandex span {
        width: 19px;
        height: 19px;
        border: 1px solid #111;
        border-radius: 50%;
        font-size: 12px;
        line-height: 17px;
        text-align: center;
    }

    .reload {
        width: 18px;
        height: 20px;
    }

    .lock-box,
    .url {
        height: 24px;
        border-radius: 6px;
        background: #cdcdcd;
        display: flex;
        align-items: center;
        color: #5e5e5e;
    }

    .lock-box {
        width: 24px;
        margin-left: 6px;
        justify-content: center;
    }

    .lock {
        width: 10px;
        height: 12px;
        color: #4b4b4b;
    }

    .url {
        margin-left: 2px;
        padding: 0 7px 0 8px;
        font-size: 15px;
    }

    .page-title {
        margin-left: 29px;
        font-size: 15px;
        flex: 1;
        min-width: 0;
        white-space: nowrap;
        overflow: hidden;
    }

    .reviews {
        display: flex;
        align-items: center;
        gap: 4px;
        font-size: 12px;
        line-height: 16px;
        white-space: nowrap;
        border-bottom: 2px solid;
        border-image: linear-gradient(90deg, #54946a 50%, #c03a36 50%) 1;
    }

    .starFill {
        width: 12px;
        height: 12px;
        color: #5e5e5e;
    }

    .address .mark {
        width: 56px;
    }

    .ribbon {
        width: 11px;
        height: 14px;
        color: #666;
    }

    .divider {
        width: 1px;
        height: 16px;
        margin-left: -4px;
        margin-right: 6px;
        background: #bbb;
    }

    .extension,
    .pocket,
    .passwords {
        width: 20px;
        height: 20px;
    }

    .address .downloads {
        position: relative;
        margin-right: 2px;
    }

    .count {
        position: absolute;
        right: 7px;
        bottom: 3px;
        width: 14px;
        height: 14px;
        border-radius: 50%;
        background: #083fb0;
        color: #fff;
        font-size: 10px;
        line-height: 14px;
    }

    .bookmarks {
        height: 24px;
        display: flex;
        align-items: center;
        gap: 13px;
        padding: 0 26px 0 15px;
        font-size: 12px;
        white-space: nowrap;
    }

    .bookmarks a {
        display: flex;
        align-items: center;
        gap: 4px;
    }

    .more-marks .line,
    .down {
        width: 10px;
        height: 10px;
    }

    .other {
        margin-left: auto;
        gap: 6px;
    }

    .viewport {
        min-height: 0;
        display: grid;
        grid-template-columns: minmax(0, 1fr) 17px;
        font-family: "Liberation Sans", Arial, sans-serif;
        font-size: 14px;
    }

    .page {
        min-height: 0;
        display: grid;
        grid-template-rows: 66px minmax(0, 1fr);
        background: #d9d9d9;
    }

    header {
        position: relative;
        z-index: 1;
        display: flex;
        align-items: center;
        padding: 0 13px 0 20px;
        color: #dfe8f6;
        background: #0058dc;
        box-shadow: 0 1px 4px rgba(0, 0, 0, 0.2);
    }

    .brand {
        width: 268px;
        display: flex;
        align-items: center;
        gap: 10px;
        font-size: 19px;
        -webkit-text-stroke: 0.3px;
    }

    .brand .logo {
        width: 50px;
        height: 46px;
    }

    header nav {
        display: flex;
        align-items: center;
        gap: 28px;
    }

    .navBack {
        width: 17px;
        height: 15px;
    }

    .navUp,
    .navDown {
        width: 8px;
        height: 14px;
    }

    .site-menu {
        gap: 11px;
        -webkit-text-stroke: 0.3px;
    }

    header nav .navBack {
        margin-right: 1px;
    }

    .account {
        margin-left: auto;
        display: flex;
        align-items: center;
        gap: 30px;
    }

    .account button {
        position: relative;
    }

    .alerts {
        margin-right: 8px;
    }

    .alert-count {
        position: absolute;
        left: 11px;
        top: -8px;
        width: 16px;
        height: 16px;
        border-radius: 50%;
        background: #d02a08;
        color: #f4e6e2;
        font: bold 10px/16px "Noto Sans", sans-serif;
    }

    .profile {
        gap: 12px;
    }

    .profile .caret {
        margin-top: 8px;
    }

    .user {
        width: 22px;
        height: 25px;
    }

    .online {
        position: absolute;
        left: 15px;
        bottom: -3px;
        width: 10px;
        height: 10px;
        border: 2px solid #e6e6e6;
        border-radius: 50%;
        background: #128a3c;
    }

    .language {
        gap: 8px;
    }

    .flag {
        width: 19px;
        height: 14px;
        background: linear-gradient(#e6e6e6 33%, #0a0a85 33% 67%, #b50d12 67%);
    }

    .columns {
        min-height: 0;
        display: grid;
        grid-template-columns: 260px minmax(0, 1fr);
    }

    .sidebar {
        background: #000;
        color: #5f6b74;
        padding-top: 10px;
        overflow: hidden;
    }

    .item {
        min-height: 39px;
        padding: 0 30px;
        display: flex;
        align-items: center;
    }

    .item .icon {
        width: 32px;
    }

    .item .icon svg {
        width: 14px;
        height: 14px;
    }

    .item .icon .invite {
        width: 16px;
    }

    .item.active {
        color: #e6e6e6;
        border-left: 3px solid #1a66c8;
        padding-left: 27px;
    }

    .right {
        width: 8px;
        height: 10px;
        margin-left: auto;
        stroke-width: 2px;
    }

    h2 {
        margin: 19px 24px 10px;
        font-size: 15px;
        line-height: 20px;
        font-weight: 400;
        color: #3d464c;
    }

    /* twelve equal rows */
    .items {
        height: 473px;
        display: grid;
        grid-auto-rows: 1fr;
    }

    main {
        min-height: 0;
        overflow: hidden;
        padding: 0 30px;
    }

    .card {
        position: relative;
        margin-bottom: 30px;
        background: #e6e6e6;
        border-radius: 4px;
        box-shadow: 0 1px 1px rgba(0, 0, 0, 0.1);
    }

    .filter {
        margin-bottom: 22px;
        color: #3b434a;
        border-radius: 0 0 4px 4px;
    }

    .profile-row {
        height: 70px;
        display: flex;
        align-items: start;
    }

    .profile-row label {
        width: 134px;
        margin-right: 28px;
        padding: 6px 0 0 54px;
        line-height: 22px;
        text-align: right;
    }

    .select {
        position: relative;
        width: 272px;
    }

    select {
        width: 100%;
        height: 31px;
        padding: 0 11px;
        border: 1px solid #bcc2c5;
        border-top: 0;
        border-radius: 0;
        background: transparent;
        color: #3b434a;
        font: inherit;
        font-size: 12px;
        appearance: none;
    }

    .select .arrowDown {
        position: absolute;
        right: 14px;
        top: 13px;
        height: 6px;
        width: 9px;
        color: #666;
        pointer-events: none;
    }

    .reports {
        display: grid;
        grid-template-columns: repeat(6, 1fr);
        border-top: 1px solid #c5c9cb;
    }

    .reports button {
        height: 70px;
        padding-top: 6px;
        flex-direction: column;
        justify-content: start;
        gap: 4px;
        line-height: 24px;
        border-bottom: 3px solid transparent;
        white-space: nowrap;
    }

    .reports svg {
        width: 24px;
        height: 20px;
        margin-top: 6px;
        margin-bottom: -1px;
        color: #36424d;
    }

    .reports .active {
        background: #d3dadd;
        border-color: #0b52c6;
    }

    .hint {
        padding: 20px 30px;
        color: #0a0a0a;
    }

    .hint p {
        margin: 0;
        font-size: 15px;
        line-height: 22px;
    }

    .info {
        display: inline-block;
        width: 8px;
        height: 14px;
        margin-right: 18px;
        color: #1387a0;
    }

    .recount {
        position: absolute;
        right: 42px;
        top: 34px;
        gap: 3px;
        font-size: 12px;
        line-height: 16px;
        color: #3b434a;
    }

    .refresh {
        width: 12px;
        height: 12px;
    }

    h1 {
        margin: 0;
        padding: 18px 30px 20px;
        font-size: 18px;
        line-height: 24px;
        font-weight: 400;
        color: #0a0a0a;
        border-bottom: 1px solid #c5c9cb;
    }

    .chart-body {
        padding: 29px 30px 31px;
    }

    .plot {
        width: 100%;
        height: auto;
        font-family: "Noto Sans", sans-serif;
        font-size: 11px;
        fill: #222;
    }

    .grid {
        stroke: #c1c1c1;
    }

    .axis {
        stroke: #9fabb8;
    }

    .bar {
        fill: #4489cf;
    }

    .axis-title {
        font-family: "DejaVu Sans", sans-serif;
    }

    .legend {
        font-weight: 700;
        fill: #000;
    }

    .export {
        stroke: #222;
        stroke-width: 3px;
        stroke-linecap: round;
    }

    .scrollbar {
        display: flex;
        flex-direction: column;
        align-items: center;
        padding: 7px 0;
        background: #d4d4d4;
        color: #000;
    }

    .thumb {
        width: 13px;
        height: 40%;
        margin: 45px 0 auto;
        background: #949494;
    }

    .taskbar {
        display: flex;
        align-items: center;
        border-top: 1px solid #000;
        box-shadow: inset 0 1px #56605a;
        background: linear-gradient(90deg, #000 28%, #001b0c 40%, #001507 52%, #003018 75%, #003c1b 79%, #001804 82%, #001c05);
        font-family: "Noto Sans", sans-serif;
        color: #d4dcd6;
    }

    .start {
        width: 54px;
    }

    .start svg {
        width: 36px;
        height: 36px;
    }

    .grip {
        width: 8px;
        height: 30px;
        margin: 0 8px 0 4px;
        background: radial-gradient(circle, #2a3630 1px, transparent 1px) 0 0 / 4px 4px;
    }

    .launch {
        width: 62px;
    }

    .launch svg,
    .task svg {
        width: 32px;
        height: 32px;
    }

    .task {
        width: 58px;
        height: 38px;
        margin-right: 4px;
        border: 1px solid #6f7d76;
        border-radius: 3px;
        background: linear-gradient(135deg, #5b6e66, #16342a 45%, #06200f);
    }

    .task.current {
        background: linear-gradient(135deg, #9fada7, #76857f 45%, #8fa098);
        border-color: #aab5b0;
    }

    .task.stacked {
        width: 52px;
        margin-left: 2px;
        margin-right: 10px;
        box-shadow: 2px 0 #0c1f16, 3px 0 #6f7d76, 5px 0 #0c1f16, 6px 0 #4f5d56;
    }

    .task + .task.stacked {
        margin-left: 0;
    }

    .tray {
        margin-left: auto;
        display: flex;
        align-items: center;
        gap: 8px;
        font-size: 12px;
    }

    .tray .grip {
        margin: 0;
    }

    .lang {
        margin: 0 8px 2px 10px;
    }

    .tray .caretUp {
        margin-right: 4px;
    }

    time {
        width: 70px;
        line-height: 17px;
        text-align: center;
    }

    .show-desktop {
        width: 14px;
        height: 38px;
        border: 1px solid #4c6a58;
        background: linear-gradient(#2a4a38, #001c08);
    }
</style>
